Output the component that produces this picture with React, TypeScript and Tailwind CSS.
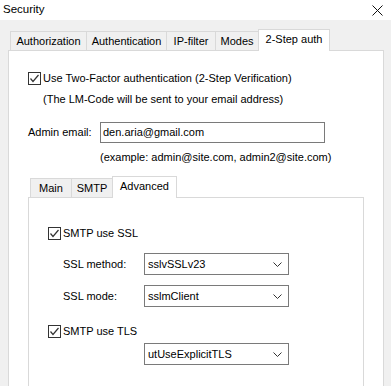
import React from 'react';

function Check() {
  return (
    <span className="flex h-[13px] w-[13px] shrink-0 items-center justify-center border border-[#333333] bg-white">
      <svg width="11" height="11" viewBox="0 0 11 11" fill="none">
        <polyline points="1.5,5.5 4,8.5 9.5,2" stroke="#333333" strokeWidth="1.2" />
      </svg>
    </span>
  );
}

function Select({ value }: { value: string }) {
  return (
    <div className="flex h-[22px] w-[145px] items-center justify-between border border-[#7a7a7a] bg-white pl-[3px] pr-[6px]">
      <span>{value}</span>
      <svg width="9" height="5" viewBox="0 0 9 5" fill="none">
        <polyline points="0.5,0.5 4.5,4.5 8.5,0.5" stroke="#333333" strokeWidth="1" />
      </svg>
    </div>
  );
}

const outerTabs = [
  { label: 'Authorization', w: 'w-[77px]' },
  { label: 'Authentication', w: 'w-[81px]' },
  { label: 'IP-filter', w: 'w-[50px]' },
  { label: 'Modes', w: 'w-[44px]' },
];

export default function App() {
  return (
    <div className="flex h-[386px] w-[391px] flex-col overflow-hidden bg-[#f0f0f0] text-[11px] text-black [font-family:'Liberation_Sans',Arial,sans-serif]">
      {/* title bar */}
      <div className="flex h-[20px] shrink-0 items-center justify-between bg-white pl-[3px] pr-[8px]">
        <span className="text-[11.5px]">Security</span>
        <svg width="11" height="11" viewBox="0 0 11 11" fill="none">
          <path d="M0.5 0.5 L10.5 10.5 M10.5 0.5 L0.5 10.5" stroke="#111111" strokeWidth="1" />
        </svg>
      </div>

      {/* outer tabs */}
      <div className="mt-[9px] flex h-[21px] shrink-0 items-end pl-[10px]">
        {outerTabs.map((t) => (
          <div
            key={t.label}
            className={`-mr-px flex h-[19px] items-center justify-center border border-b-0 border-[#d9d9d9] bg-[#f0f0f0] ${t.w}`}
          >
            {t.label}
          </div>
        ))}
        <div className="relative z-10 -mb-px flex h-[22px] w-[72px] items-center justify-center border border-b-0 border-[#d9d9d9] bg-white pb-[2px]">
          2-Step auth
        </div>
      </div>

      {/* outer panel, runs past the bottom of the window */}
      <div className="ml-[8px] flex h-[360px] w-[376px] shrink-0 flex-col border border-[#d9d9d9] bg-white">
        <div className="mt-[20px] flex h-[14px] items-center gap-[2px] pl-[19px]">
          <Check />
          <span>Use Two-Factor authentication (2-Step Verification)</span>
        </div>
        <div className="mt-[7px] flex h-[14px] items-center pl-[34px]">
          (The LM-Code will be sent to your email address)
        </div>

        <div className="mt-[16px] flex h-[21px] items-center pl-[19px]">
          <span className="w-[72px]">Admin email:</span>
          <div className="flex h-[21px] w-[225px] items-center border border-[#7a7a7a] pl-[2px]">
            den.aria@gmail.com
          </div>
        </div>
        <div className="mt-[7px] flex h-[14px] items-center pl-[91px]">
          (example: admin@site.com, admin2@site.com)
        </div>

        {/* inner tabs */}
        <div className="mt-[12px] flex h-[21px] items-end pl-[21px]">
          <div className="-mr-px flex h-[19px] w-[42px] items-center justify-center border border-b-0 border-[#d9d9d9] bg-[#f0f0f0]">
            Main
          </div>
          <div className="-mr-px flex h-[19px] w-[42px] items-center justify-center border border-b-0 border-[#d9d9d9] bg-[#f0f0f0]">
            SMTP
          </div>
          <div className="relative z-10 -mb-px flex h-[22px] w-[65px] items-center justify-center border border-b-0 border-[#d9d9d9] bg-white pb-[2px]">
            Advanced
          </div>
        </div>

        {/* inner panel */}
        <div className="ml-[19px] flex h-[200px] w-[336px] shrink-0 flex-col border border-[#d9d9d9] bg-white pl-[19px]">
          <div className="mt-[28px] flex h-[14px] items-center gap-[2px]">
            <Check />
            <span>SMTP use SSL</span>
          </div>
          <div className="mt-[13px] flex h-[22px] items-center pl-[15px]">
            <span className="w-[81px]">SSL method:</span>
            <Select value="sslvSSLv23" />
          </div>
          <div className="mt-[10px] flex h-[22px] items-center pl-[15px]">
            <span className="w-[81px]">SSL mode:</span>
            <Select value="sslmClient" />
          </div>
          <div className="mt-[17px] flex h-[14px] items-center gap-[2px]">
            <Check />
            <span>SMTP use TLS</span>
          </div>
          <div className="mt-[5px] flex h-[22px] items-center pl-[96px]">
            <Select value="utUseExplicitTLS" />
          </div>
        </div>
      </div>
    </div>
  );
}
